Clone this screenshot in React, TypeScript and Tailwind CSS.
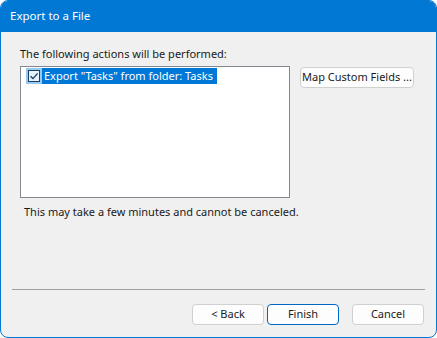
import React from "react";

const font = { fontFamily: '"Noto Sans", "Open Sans", sans-serif' };

function Btn({ label, focused }: { label: string; focused?: boolean }) {
  return (
    <button
      className={
        "w-[72px] h-[21px] rounded-[4px] bg-[#fdfdfd] text-[11px] text-[#1a1a1a] flex items-center justify-center whitespace-nowrap " +
        (focused ? "border-[1.5px] border-[#0067c0]" : "border border-[#d0d0d0]")
      }
    >
      {label}
    </button>
  );
}

export default function App() {
  return (
    <div className="w-[437px] h-[338px] bg-white" style={font}>
      <div className="w-full h-full flex flex-col rounded-t-lg rounded-b-lg border border-[#0078d4] overflow-hidden bg-[#f0f0f0]">
        <div className="h-[31px] shrink-0 bg-[#0078d4] text-white text-[11.5px] flex items-center pl-[9px] pb-[1px]">
          Export to a File
        </div>
        <div className="flex-1 flex flex-col pl-[19px] pr-[22px] pt-[14px]">
          <div className="text-[11px] leading-[16px] text-[#1a1a1a]">The following actions will be performed:</div>
          <div className="flex items-start mt-[4px] gap-[10px]">
            <div className="w-[270px] h-[132px] bg-white border border-[#828790] p-[1px] pl-[5px]">
              <div className="flex items-center h-[16px]">
                <div className="w-[16px] h-[16px] bg-[#99c9ef] flex items-center justify-center">
                  <svg width="12" height="12" viewBox="0 0 12 12">
                    <rect x="0.5" y="0.5" width="11" height="11" fill="#e5f1fb" stroke="#1b3f6a" />
                    <path d="M2.5 6.2 L5 8.6 L9.6 3.4" fill="none" stroke="#1b3f6a" strokeWidth="1.4" />
                  </svg>
                </div>
                <div className="h-[16px] bg-[#0078d7] text-white text-[11px] leading-[16px] pl-[2px] pr-[4px] whitespace-nowrap">
                  Export "Tasks" from folder: Tasks
                </div>
              </div>
            </div>
            <button className="mt-[1px] w-[114px] h-[21px] rounded-[4px] bg-[#fdfdfd] border border-[#d0d0d0] text-[11px] text-[#1a1a1a] flex items-center justify-center whitespace-nowrap">
              Map Custom Fields ...
            </button>
          </div>
          <div className="mt-[6px] pl-[4px] text-[11px] leading-[16px] text-[#1a1a1a]">
            This may take a few minutes and cannot be canceled.
          </div>
        </div>
        <div className="mx-[11px] h-px bg-[#a0a0a0] shrink-0" />
        <div className="h-[47px] shrink-0 flex items-start justify-end pt-[14px] pr-[12px]">
          <div className="flex">
            <Btn label="< Back" />
            <div className="ml-[3px]">
              <Btn label="Finish" focused />
            </div>
            <div className="ml-[13px]">
              <Btn label="Cancel" />
            </div>
          </div>
        </div>
      </div>
    </div>
  );
}
